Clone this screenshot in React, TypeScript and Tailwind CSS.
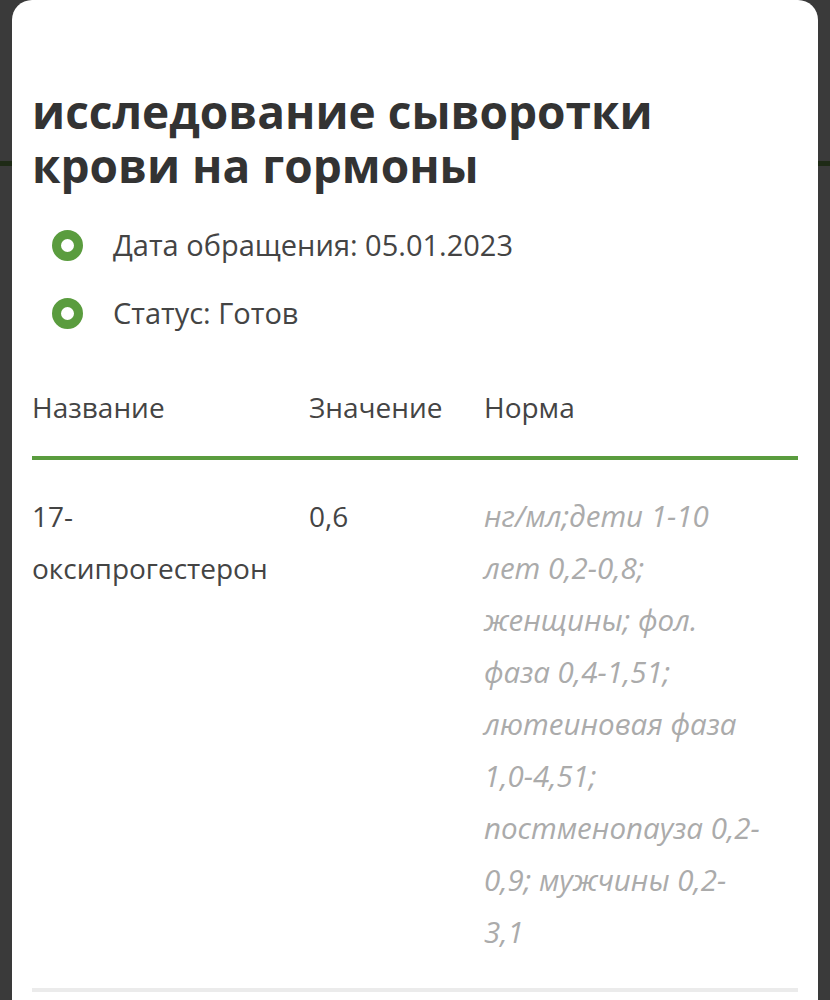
import React from 'react';

type Row = { name: string; value: string; norm: string };

const rows: Row[] = [
  {
    name: '17-оксипрогестерон',
    value: '0,6',
    norm: 'нг/мл;дети 1-10 лет 0,2-0,8; женщины; фол. фаза 0,4-1,51; лютеиновая фаза 1,0-4,51; постменопауза 0,2-0,9; мужчины 0,2-3,1',
  },
];

function Ring() {
  return <span className="block w-[31px] h-[31px] shrink-0 rounded-full border-[9px] border-[#5a9c3e]" />;
}

export default function App() {
  return (
    <div
      className="relative h-[1000px] overflow-hidden bg-[#3a3a3a] px-[12px] text-[#444444]"
      style={{ fontFamily: '"Open Sans", "Noto Sans", sans-serif' }}
    >
      {/* header bar of the page behind the sheet */}
      <div className="absolute left-0 right-0 top-[161px] h-[5px] bg-[#1e2a16]" />

      <div className="relative min-h-[1000px] rounded-t-[20px] bg-white px-[20px] pt-[84px]">
        <h1 className="text-[46px] font-bold leading-[54px] text-[#333333]">
          исследование сыворотки крови на гормоны
        </h1>

        <ul className="mt-[32px] flex flex-col gap-[26px] pl-[20px]">
          <li className="flex h-[42px] items-center gap-[30px] text-[29px]">
            <Ring />
            <span>Дата обращения: 05.01.2023</span>
          </li>
          <li className="flex h-[42px] items-center gap-[30px] text-[29px]">
            <Ring />
            <span>Статус: Готов</span>
          </li>
        </ul>

        <table className="mt-[47px] w-full table-fixed border-collapse text-[28px] leading-[52px]">
          <colgroup>
            <col className="w-[277px]" />
            <col className="w-[175px]" />
            <col />
          </colgroup>
          <thead>
            <tr className="border-b-4 border-[#5a9c3e]">
              <th className="pb-[23px] text-left font-normal">Название</th>
              <th className="pb-[23px] text-left font-normal">Значение</th>
              <th className="pb-[23px] text-left font-normal">Норма</th>
            </tr>
          </thead>
          <tbody>
            {rows.map((r) => (
              <tr key={r.name} className="border-b-4 border-[#ebebeb] align-top">
                <td className="py-[30px] pr-[20px] break-words">{r.name}</td>
                <td className="py-[30px] pr-[20px]">{r.value}</td>
                <td className="py-[30px] pr-[36px] text-[29.5px] italic text-[#ababab]">{r.norm}</td>
              </tr>
            ))}
          </tbody>
        </table>
      </div>
    </div>
  );
}
